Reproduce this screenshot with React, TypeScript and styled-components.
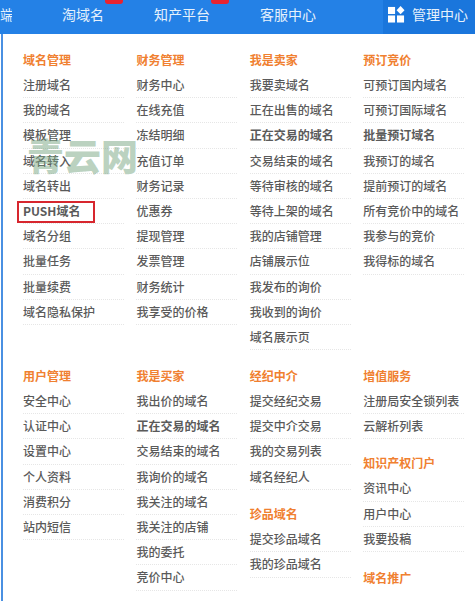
import React from 'react';
import styled, { createGlobalStyle } from 'styled-components';

type Item = { label: string; strong?: boolean; boxed?: boolean };
type Group = { title: string; gap?: number; items: Item[] };

const t = (...labels: string[]): Item[] => labels.map(label => ({ label }));

const topColumns: Group[][] = [
  [
    {
      title: '域名管理',
      items: [
        ...t('注册域名', '我的域名', '模板管理', '域名转入', '域名转出'),
        { label: 'PUSH域名', strong: true, boxed: true },
        ...t('域名分组', '批量任务', '批量续费', '域名隐私保护'),
      ],
    },
  ],
  [
    {
      title: '财务管理',
      items: t('财务中心', '在线充值', '冻结明细', '充值订单', '财务记录', '优惠券', '提现管理', '发票管理', '财务统计', '我享受的价格'),
    },
  ],
  [
    {
      title: '我是卖家',
      items: [
        ...t('我要卖域名', '正在出售的域名'),
        { label: '正在交易的域名', strong: true },
        ...t('交易结束的域名', '等待审核的域名', '等待上架的域名', '我的店铺管理', '店铺展示位', '我发布的询价', '我收到的询价', '域名展示页'),
      ],
    },
  ],
  [
    {
      title: '预订竞价',
      items: [
        ...t('可预订国内域名', '可预订国际域名'),
        { label: '批量预订域名', strong: true },
        ...t('我预订的域名', '提前预订的域名', '所有竞价中的域名', '我参与的竞价', '我得标的域名'),
      ],
    },
  ],
];

const bottomColumns: Group[][] = [
  [{ title: '用户管理', items: t('安全中心', '认证中心', '设置中心', '个人资料', '消费积分', '站内短信') }],
  [
    {
      title: '我是买家',
      items: [
        ...t('我出价的域名'),
        { label: '正在交易的域名', strong: true },
        ...t('交易结束的域名', '我询价的域名', '我关注的域名', '我关注的店铺', '我的委托', '竞价中心'),
      ],
    },
  ],
  [
    { title: '经纪中介', items: t('提交经纪交易', '提交中介交易', '我的交易列表', '域名经纪人') },
    { title: '珍品域名', gap: 11.5, items: t('提交珍品域名', '我的珍品域名') },
  ],
  [
    { title: '增值服务', items: t('注册局安全锁列表', '云解析列表') },
    { title: '知识产权门户', gap: 11, items: t('资讯中心', '用户中心', '我要投稿') },
    { title: '域名推广', gap: 13, items: [] },
  ],
];

export default function App() {
  return (
    <Page>
      <GlobalStyle />
      <Header>
        <EdgeLabel>端</EdgeLabel>
        <NavItem>
          淘域名
          <Badge />
        </NavItem>
        <NavItem>
          知产平台
          <Badge />
        </NavItem>
        <NavItem>客服中心</NavItem>
        <ActiveItem>
          <svg width="17" height="17" viewBox="0 0 18 18" fill="#fff">
            <rect x="0" y="1" width="7.5" height="7.5" />
            <rect x="0" y="10" width="7.5" height="7.5" />
            <rect x="9.5" y="10" width="7.5" height="7.5" />
            <path d="M13.3 0l4.2 4.4-4.2 4.4-4.2-4.4z" />
          </svg>
          管理中心
        </ActiveItem>
      </Header>
      <Panel>
        <MenuGrid>
          {topColumns.map((groups, i) => (
            <Column key={i}>{groups.map(renderGroup)}</Column>
          ))}
        </MenuGrid>
        <MenuGrid $second>
          {bottomColumns.map((groups, i) => (
            <Column key={i}>{groups.map(renderGroup)}</Column>
          ))}
        </MenuGrid>
        <Watermark>青云网</Watermark>
      </Panel>
    </Page>
  );
}

function renderGroup(group: Group) {
  return (
    <GroupBlock key={group.title} $gap={group.gap}>
      <GroupTitle>{group.title}</GroupTitle>
      {group.items.map(item => (
        <Row key={item.label} $strong={item.strong} $boxed={item.boxed}>
          {item.label}
        </Row>
      ))}
    </GroupBlock>
  );
}

const GlobalStyle = createGlobalStyle`
  html, body {
    margin: 0;
    padding: 0;
    background: #fff;
  }
`;

const Page = styled.div`
  width: 475px;
  height: 601px;
  overflow: hidden;
  font-family: "Noto Sans CJK SC", "Liberation Sans", sans-serif;
`;

const Header = styled.div`
  display: flex;
  align-items: center;
  height: 34px;
  background: #2481e6;
  color: #e6f1fc;
  font-size: 14px;
`;

const EdgeLabel = styled.span`
  width: 12px;
  margin-bottom: 6px;
  overflow: hidden;
`;

const NavItem = styled.span`
  position: relative;
  margin: 0 0 6px 50px;
`;

const Badge = styled.i`
  position: absolute;
  top: -7px;
  right: -19px;
  width: 18px;
  height: 7px;
  border-radius: 3px;
  background: #e8232f;
`;

const ActiveItem = styled.span`
  display: flex;
  align-items: center;
  gap: 7px;
  box-sizing: border-box;
  height: 100%;
  width: 92px;
  margin-left: auto;
  padding: 0 0 6px 5px;
  background: #1a76dc;
`;

const Panel = styled.div`
  position: relative;
  height: 567px;
  padding-left: 23px;
  box-sizing: border-box;
  border-left: 2px solid #4a90e2;
  margin-left: 1px;
`;

const MenuGrid = styled.div<{ $second?: boolean }>`
  display: grid;
  grid-template-columns: repeat(4, 113.4px);
  margin-left: -3px;
  padding-top: ${props => (props.$second ? 0 : 13)}px;
  height: ${props => (props.$second ? 240 : 316)}px;
`;

const Column = styled.div`
  display: flex;
  flex-direction: column;
`;

const GroupBlock = styled.div<{ $gap?: number }>`
  margin-top: ${props => props.$gap ?? 0}px;
`;

const GroupTitle = styled.div`
  height: 26px;
  line-height: 25px;
  font-size: 12px;
  font-weight: 700;
  color: #f08030;
`;

const Row = styled.div<{ $strong?: boolean; $boxed?: boolean }>`
  position: relative;
  width: 101px;
  height: 24.2px;
  line-height: 24.2px;
  border-bottom: 1px dotted #e6e6e6;
  font-size: 12px;
  font-weight: ${props => (props.$strong ? 700 : 500)};
  color: #5a5a5a;

  ${props =>
    props.$boxed &&
    `
    &::before {
      content: '';
      position: absolute;
      left: -6px;
      top: 2px;
      width: 74px;
      height: 18px;
      border: 2px solid #d7262e;
    }
  `}
`;

const Watermark = styled.div`
  position: absolute;
  left: 24px;
  top: 99px;
  font-size: 37px;
  line-height: 44px;
  font-weight: 900;
  color: rgba(120, 165, 130, 0.5);
  pointer-events: none;
`;
